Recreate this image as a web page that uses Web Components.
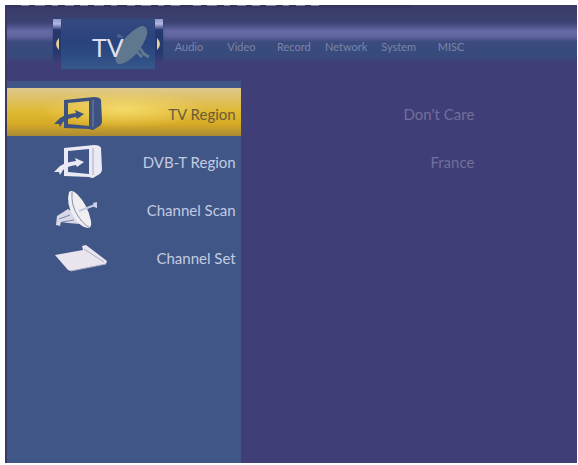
<!DOCTYPE html>
<html lang="en">
<head>
<meta charset="utf-8">
<title>TV Setup</title>
<style>
  html { height: 100%; }
  body {
    margin: 0;
    padding: 5px 1px 2px 5px;
    box-sizing: border-box;
    min-height: 100%;
    display: flex;
    background: #fff;
    font-family: Lato, "Open Sans", sans-serif;
  }
</style>
</head>
<body>
<setup-screen>
  <setup-tabs slot="tabs"></setup-tabs>
  <setup-row icon="tv" selected value="Don't Care">TV Region</setup-row>
  <setup-row icon="tv" value="France">DVB-T Region</setup-row>
  <setup-row icon="dish">Channel Scan</setup-row>
  <setup-row icon="sheet">Channel Set</setup-row>
</setup-screen>

<script>
const ICONS = {
  tv: `
    <svg width="52" height="36" viewBox="0 0 52 36">
      <path fill="currentColor" fill-rule="evenodd" d="M10 4 L40 1 Q46 1 47 4 L48 25 Q48 29 44 31 L39 34 Q37 34 35 33 L10 32 Z M14 7 V28 L35 30 V5 Z"/>
      <path fill="none" stroke="var(--icon-edge)" stroke-width="1" d="M39 4 V31"/>
      <path fill="currentColor" d="M0 28 L6 22 Q12 18 22 17 L21 14 L30 18 L23 23 L22 21 Q14 22 9 26 L6 31 L5 28 Z"/>
    </svg>`,
  dish: `
    <svg width="52" height="42" viewBox="0 0 52 42">
      <path fill="#d9d8e8" d="M3 27 L14 20 L25 27 L26 35 L14 34 L7 33 L6 37 L2 36 Z"/>
      <path fill="none" stroke="#7686ab" stroke-width="1" d="M5 30 L16 26 M8 33 L20 31"/>
      <path fill="#f1eef2" d="M15 3 Q18 0 23 5 Q34 16 37 32 Q38 39 34 39 Q27 39 19 27 Q12 14 15 3 Z"/>
      <path fill="none" stroke="#8790ae" stroke-width="1" d="M18 3 Q17 17 24 27 Q30 36 35 38"/>
      <path fill="none" stroke="#c3cae2" stroke-width="2" d="M25 22 L41 16"/>
      <path fill="#c9d2ea" d="M39 14 L43 13 V19 L40 18 Z"/>
    </svg>`,
  sheet: `
    <svg width="54" height="30" viewBox="0 0 54 30">
      <path fill="#e9e4ee" d="M1 12 L29 7 L28 3 L32 2 L53 18 L52 21 L17 28 L14 27 Z"/>
      <path fill="none" stroke="#a9adc8" stroke-width="1" d="M30 6 L50 19 M17 28 L52 21"/>
    </svg>`
};

class SetupScreen extends HTMLElement {
  constructor() {
    super();
    this.attachShadow({ mode: "open" });
    this.shadowRoot.innerHTML = `
      <style>
        :host {
          flex: 1;
          min-width: 0;
          display: flex;
          flex-direction: column;
          background: #403e76;
          border-left: 2px solid #39386a;
          box-sizing: border-box;
        }
        main {
          flex: 1;
          margin-top: 12px;
          padding-top: 7px;
          background: linear-gradient(90deg, #3f5687 41%, #403e76 41%);
        }
      </style>
      <slot name="tabs"></slot>
      <main><slot></slot></main>
    `;
  }
}

class SetupTabs extends HTMLElement {
  constructor() {
    super();
    this.attachShadow({ mode: "open" });
    const tabs = ["Audio", "Video", "Record", "Network", "System", "MISC"];
    this.shadowRoot.innerHTML = `
      <style>
        :host {
          display: block;
          background: linear-gradient(#393b66 0, #3b4070 14px, #3e4377 18px, #656aa4 26px, #6265a1 31px, #3c4a7c 37px, #384b7d 46px, #3a4779 55px, #403e76 57px);
        }
        .cut {
          height: 14px;
          background: linear-gradient(#303257, transparent 4px) no-repeat 0 0 / 71% 100%;
        }
        .cut svg { display: block; }
        nav {
          display: flex;
          align-items: flex-start;
          padding-left: 8%;
        }
        button {
          margin: 0;
          padding: 0;
          border: 0;
          background: none;
          font-family: inherit;
          cursor: pointer;
        }
        .current {
          flex: 0 0 21%;
          height: 50px;
          display: flex;
          align-items: stretch;
          background: linear-gradient(#35497f, #29437d 45%, #2d4c84 75%, #37588b);
          box-shadow: 0 0 2px #324a80;
        }
        .cap {
          flex: 0 0 8px;
          background: linear-gradient(#8f98cc 0, #b2b6df 5px, #536099 9px, #25386d 11px, #263a70 34px, #403e76 44px);
        }
        .cap svg { display: block; }
        .name {
          flex: 1;
          display: flex;
          align-items: center;
          justify-content: flex-end;
          color: #dfe0ed;
          font-size: 25px;
          line-height: 28px;
        }
        .name span { z-index: 1; margin-right: -11px; padding-top: 6px; }
        .name svg { margin-right: 4px; }
        .tab {
          flex: 0 0 10%;
          padding-top: 21px;
          color: #7a83ab;
          font-size: 11px;
          line-height: 14px;
        }
      </style>
      <div class="cut">
        <svg width="320" height="3" aria-hidden="true">
          <path fill="none" stroke="#8486a8" stroke-width="2" stroke-dasharray="8 6 10 7 6 7 9 6" d="M14 0 H110 M120 0 H176 M186 0 H312"/>
        </svg>
      </div>
      <nav>
        <div class="current">
          <button class="cap" aria-label="Previous"><svg width="8" height="14"><path fill="#e8ce9a" d="M6 1 Q0 7 6 13 Z"/></svg></button>
          <button class="name"><span>TV</span><svg width="38" height="40" viewBox="0 0 38 40">
            <path fill="#60788f" d="M28 2 Q35 1 34 10 Q32 19 24 29 Q13 41 5 40 Q0 37 5 25 Q13 9 28 2 Z"/>
            <path fill="none" stroke="#60788f" stroke-width="3" d="M26 23 L31 30 L36 33 M24 28 L29 33"/>
            <path fill="none" stroke="#49638c" stroke-width="2" d="M6 11 L10 14"/>
            <circle cx="6" cy="12" r="2" fill="#49638c"/>
          </svg></button>
          <button class="cap" aria-label="Next"><svg width="8" height="14"><path fill="#e8ce9a" d="M2 1 Q8 7 2 13 Z"/></svg></button>
        </div>
        ${tabs.map((name) => `<button class="tab">${name}</button>`).join("")}
      </nav>
    `;
  }
}

class SetupRow extends HTMLElement {
  constructor() {
    super();
    this.attachShadow({ mode: "open" });
  }

  connectedCallback() {
    const value = this.getAttribute("value") || "";
    this.shadowRoot.innerHTML = `
      <style>
        :host {
          --icon-edge: #a5abc7;
          display: grid;
          grid-template-columns: 41% 41%;
          height: 48px;
          font-size: 15px;
          line-height: 20px;
        }
        button {
          display: flex;
          align-items: center;
          justify-content: space-between;
          margin: 0;
          padding: 3px 5px 0 20%;
          border: 0;
          background: none;
          color: #c4cbe0;
          font: inherit;
          text-align: right;
          cursor: pointer;
        }
        .icon { display: flex; color: #ebe9f4; }
        :host([selected]) { --icon-edge: #7685a2; }
        :host([selected]) button {
          color: #6b5c38;
          background:
            radial-gradient(ellipse at 50% 45%, rgba(249, 224, 116, 0.8), transparent 50%),
            linear-gradient(#dfc98e 0, #dfc166 10px, #dfb932 24px, #d6aa25 36px, #a98a35 48px);
        }
        :host([selected]) .icon { color: #3e5280; }
        .value {
          align-self: center;
          padding-top: 3px;
          text-align: right;
          color: #716f9c;
        }
      </style>
      <button><span class="icon">${ICONS[this.getAttribute("icon")] || ""}</span><slot></slot></button>
      <span class="value">${value}</span>
    `;
  }
}

customElements.define("setup-screen", SetupScreen);
customElements.define("setup-tabs", SetupTabs);
customElements.define("setup-row", SetupRow);
</script>
</body>
</html>
